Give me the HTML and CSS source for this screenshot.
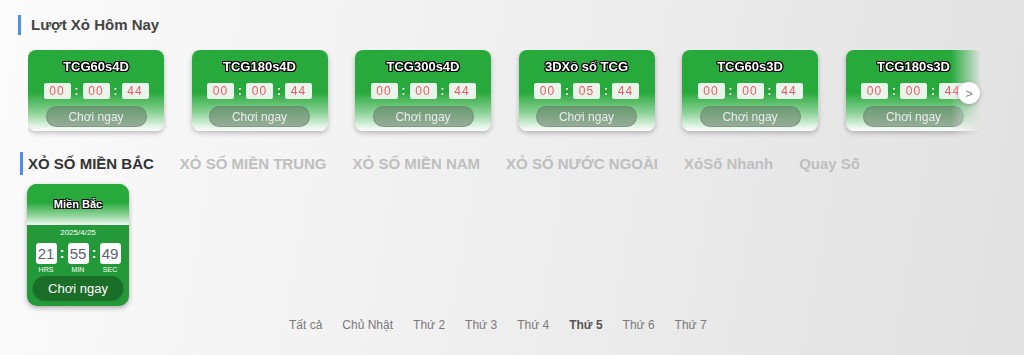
FILE: index.html
```html
<!DOCTYPE html>
<html lang="vi">
  <head>
    <meta charset="UTF-8" />
    <meta name="viewport" content="width=device-width, initial-scale=1.0" />
    <title>Xổ Số</title>
    <link rel="stylesheet" href="styles.css">
  </head>
  <body>
    <div class="page">
      <h2 class="sec-title">Lượt Xỏ Hôm Nay</h2>

      <div class="carousel">
        <div class="track">
          <div class="game">
            <div class="game-name">TCG60s4D</div>
            <div class="clock">
              <span class="num">00</span><span class="colon">:</span><span class="num">00</span><span class="colon">:</span><span class="num">44</span>
            </div>
            <button class="play">Chơi ngay</button>
          </div>
          <div class="game">
            <div class="game-name">TCG180s4D</div>
            <div class="clock">
              <span class="num">00</span><span class="colon">:</span><span class="num">00</span><span class="colon">:</span><span class="num">44</span>
            </div>
            <button class="play">Chơi ngay</button>
          </div>
          <div class="game">
            <div class="game-name">TCG300s4D</div>
            <div class="clock">
              <span class="num">00</span><span class="colon">:</span><span class="num">00</span><span class="colon">:</span><span class="num">44</span>
            </div>
            <button class="play">Chơi ngay</button>
          </div>
          <div class="game">
            <div class="game-name">3DXỏ số TCG</div>
            <div class="clock">
              <span class="num">00</span><span class="colon">:</span><span class="num">05</span><span class="colon">:</span><span class="num">44</span>
            </div>
            <button class="play">Chơi ngay</button>
          </div>
          <div class="game">
            <div class="game-name">TCG60s3D</div>
            <div class="clock">
              <span class="num">00</span><span class="colon">:</span><span class="num">00</span><span class="colon">:</span><span class="num">44</span>
            </div>
            <button class="play">Chơi ngay</button>
          </div>
          <div class="game">
            <div class="game-name">TCG180s3D</div>
            <div class="clock">
              <span class="num">00</span><span class="colon">:</span><span class="num">00</span><span class="colon">:</span><span class="num">44</span>
            </div>
            <button class="play">Chơi ngay</button>
          </div>
        </div>
        <button class="next">&gt;</button>
      </div>

      <div class="tabs">
        <span class="tab active">XỎ SỐ MIỀN BẮC</span>
        <span class="tab">XỎ SỐ MIỀN TRUNG</span>
        <span class="tab">XỎ SỐ MIỀN NAM</span>
        <span class="tab">XỎ SỐ NƯỚC NGOÀI</span>
        <span class="tab">XỏSố Nhanh</span>
        <span class="tab">Quay Số</span>
      </div>

      <div class="region">
        <div class="region-head">Miền Bắc</div>
        <div class="region-body">
          <div class="date">2025/4/25</div>
          <div class="countdown">
            <div class="unit"><span class="box">21</span><span class="lbl">HRS</span></div>
            <span class="sep">:</span>
            <div class="unit"><span class="box">55</span><span class="lbl">MIN</span></div>
            <span class="sep">:</span>
            <div class="unit"><span class="box">49</span><span class="lbl">SEC</span></div>
          </div>
          <button class="region-play">Chơi ngay</button>
        </div>
      </div>

      <div class="days">
        <span>Tất cả</span>
        <span>Chủ Nhật</span>
        <span>Thứ 2</span>
        <span>Thứ 3</span>
        <span>Thứ 4</span>
        <span class="today">Thứ 5</span>
        <span>Thứ 6</span>
        <span>Thứ 7</span>
      </div>
    </div>
  </body>
</html>
```

FILE: styles.css
```css
body {
  margin: 0;
  font-family: "Liberation Sans", Arial, sans-serif;
  background: linear-gradient(100deg, #fbfbfb 0%, #f0f0f0 45%, #e1e1e1 100%);
  height: 355px;
  overflow: hidden;
}

.page {
  padding-top: 15px;
}

.sec-title {
  margin: 0 0 0 18px;
  padding-left: 10px;
  border-left: 3px solid #4a8ff0;
  font-size: 15px;
  line-height: 20px;
  font-weight: bold;
  color: #444;
}

.carousel {
  position: relative;
  margin-top: 15px;
  margin-left: 28px;
  width: 953px;
  height: 88px;
}

.track {
  display: flex;
  gap: 27.5px;
  height: 88px;
  overflow: hidden;
  -webkit-mask-image: linear-gradient(to right, #000 calc(100% - 30px), transparent);
  mask-image: linear-gradient(to right, #000 calc(100% - 30px), transparent);
}

.game {
  flex: 0 0 136px;
  height: 81px;
  box-sizing: border-box;
  border-radius: 8px;
  background: linear-gradient(180deg, #27a93b 0%, #27a93b 52%, #8fd39a 78%, #ffffff 100%);
  box-shadow: 0 2px 5px rgba(0, 0, 0, 0.25);
  display: flex;
  flex-direction: column;
  align-items: center;
  padding-top: 9px;
}

.game-name {
  font-size: 13px;
  line-height: 16px;
  font-weight: bold;
  color: #fff;
  text-shadow: 1px 1px 0 #000, -1px -1px 0 #000, 1px -1px 0 #000, -1px 1px 0 #000, 0 1px 0 #000, 0 -1px 0 #000, 1px 0 0 #000, -1px 0 0 #000;
}

.clock {
  display: flex;
  align-items: center;
  margin-top: 8px;
}

.num {
  width: 27px;
  height: 16px;
  line-height: 16px;
  text-align: center;
  background: #e9f5ea;
  border-radius: 2px;
  color: #f0566a;
  font-size: 12px;
  letter-spacing: 1px;
}

.colon {
  width: 12px;
  text-align: center;
  color: #fff;
  font-weight: bold;
  font-size: 13px;
  line-height: 16px;
  text-shadow: 0 0 1px #333;
}

.play {
  margin-top: 7px;
  width: 101px;
  height: 21px;
  border: none;
  border-radius: 11px;
  background: rgba(105, 130, 108, 0.62);
  box-shadow: inset 0 0 0 1px rgba(90, 110, 90, 0.3);
  color: #ececec;
  font-family: inherit;
  font-size: 12px;
  padding: 0;
}

.next {
  position: absolute;
  right: 1px;
  top: 32px;
  width: 22px;
  height: 22px;
  border-radius: 50%;
  border: none;
  background: #fff;
  box-shadow: 0 1px 4px rgba(0, 0, 0, 0.25);
  color: #888;
  font-family: inherit;
  font-size: 13px;
  padding: 0;
}

.tabs {
  display: flex;
  gap: 26px;
  margin-top: 14px;
  margin-left: 20px;
  border-left: 3px solid #4a8ff0;
  padding-left: 5px;
  height: 23px;
  align-items: center;
}

.tab {
  font-size: 15px;
  font-weight: bold;
  color: #bfbfbf;
}

.tab.active {
  color: #333;
}

.region {
  margin: 9px 0 0 27px;
  width: 102px;
  height: 122px;
  border-radius: 10px;
  overflow: hidden;
  background: #24993a;
  box-shadow: 0 2px 5px rgba(0, 0, 0, 0.3);
}

.region-head {
  height: 41px;
  box-sizing: border-box;
  padding-top: 14px;
  text-align: center;
  font-size: 11px;
  line-height: 13px;
  font-weight: bold;
  color: #fff;
  background: linear-gradient(180deg, #27a93b 0%, #27a93b 45%, #9bd8a4 80%, #f4fbf4 100%);
  text-shadow: 1px 1px 0 #000, -1px -1px 0 #000, 1px -1px 0 #000, -1px 1px 0 #000;
}

.region-body {
  display: flex;
  flex-direction: column;
  align-items: center;
}

.date {
  margin-top: 3px;
  font-size: 8px;
  line-height: 10px;
  color: #fff;
}

.countdown {
  display: flex;
  align-items: flex-start;
  margin-top: 5px;
  gap: 2px;
}

.unit {
  display: flex;
  flex-direction: column;
  align-items: center;
  width: 22px;
}

.box {
  width: 21px;
  height: 21px;
  line-height: 21px;
  background: #fff;
  border-radius: 3px;
  text-align: center;
  color: #5b6273;
  font-size: 15px;
}

.lbl {
  margin-top: 2px;
  font-size: 7px;
  color: #fff;
}

.sep {
  width: 6px;
  text-align: center;
  color: #fff;
  font-weight: bold;
  font-size: 14px;
  line-height: 21px;
}

.region-play {
  margin-top: 3px;
  width: 90px;
  height: 24px;
  border: none;
  border-radius: 12px;
  background: #1b6e27;
  box-shadow: 0 1px 2px rgba(0, 0, 0, 0.3);
  color: #fff;
  font-family: inherit;
  font-size: 13px;
  padding: 0;
}

.days {
  display: flex;
  gap: 20px;
  margin-top: 12px;
  padding-left: 289px;
  font-size: 12px;
  color: #7a7a7a;
}

.days .today {
  font-weight: bold;
  color: #555;
}
```
